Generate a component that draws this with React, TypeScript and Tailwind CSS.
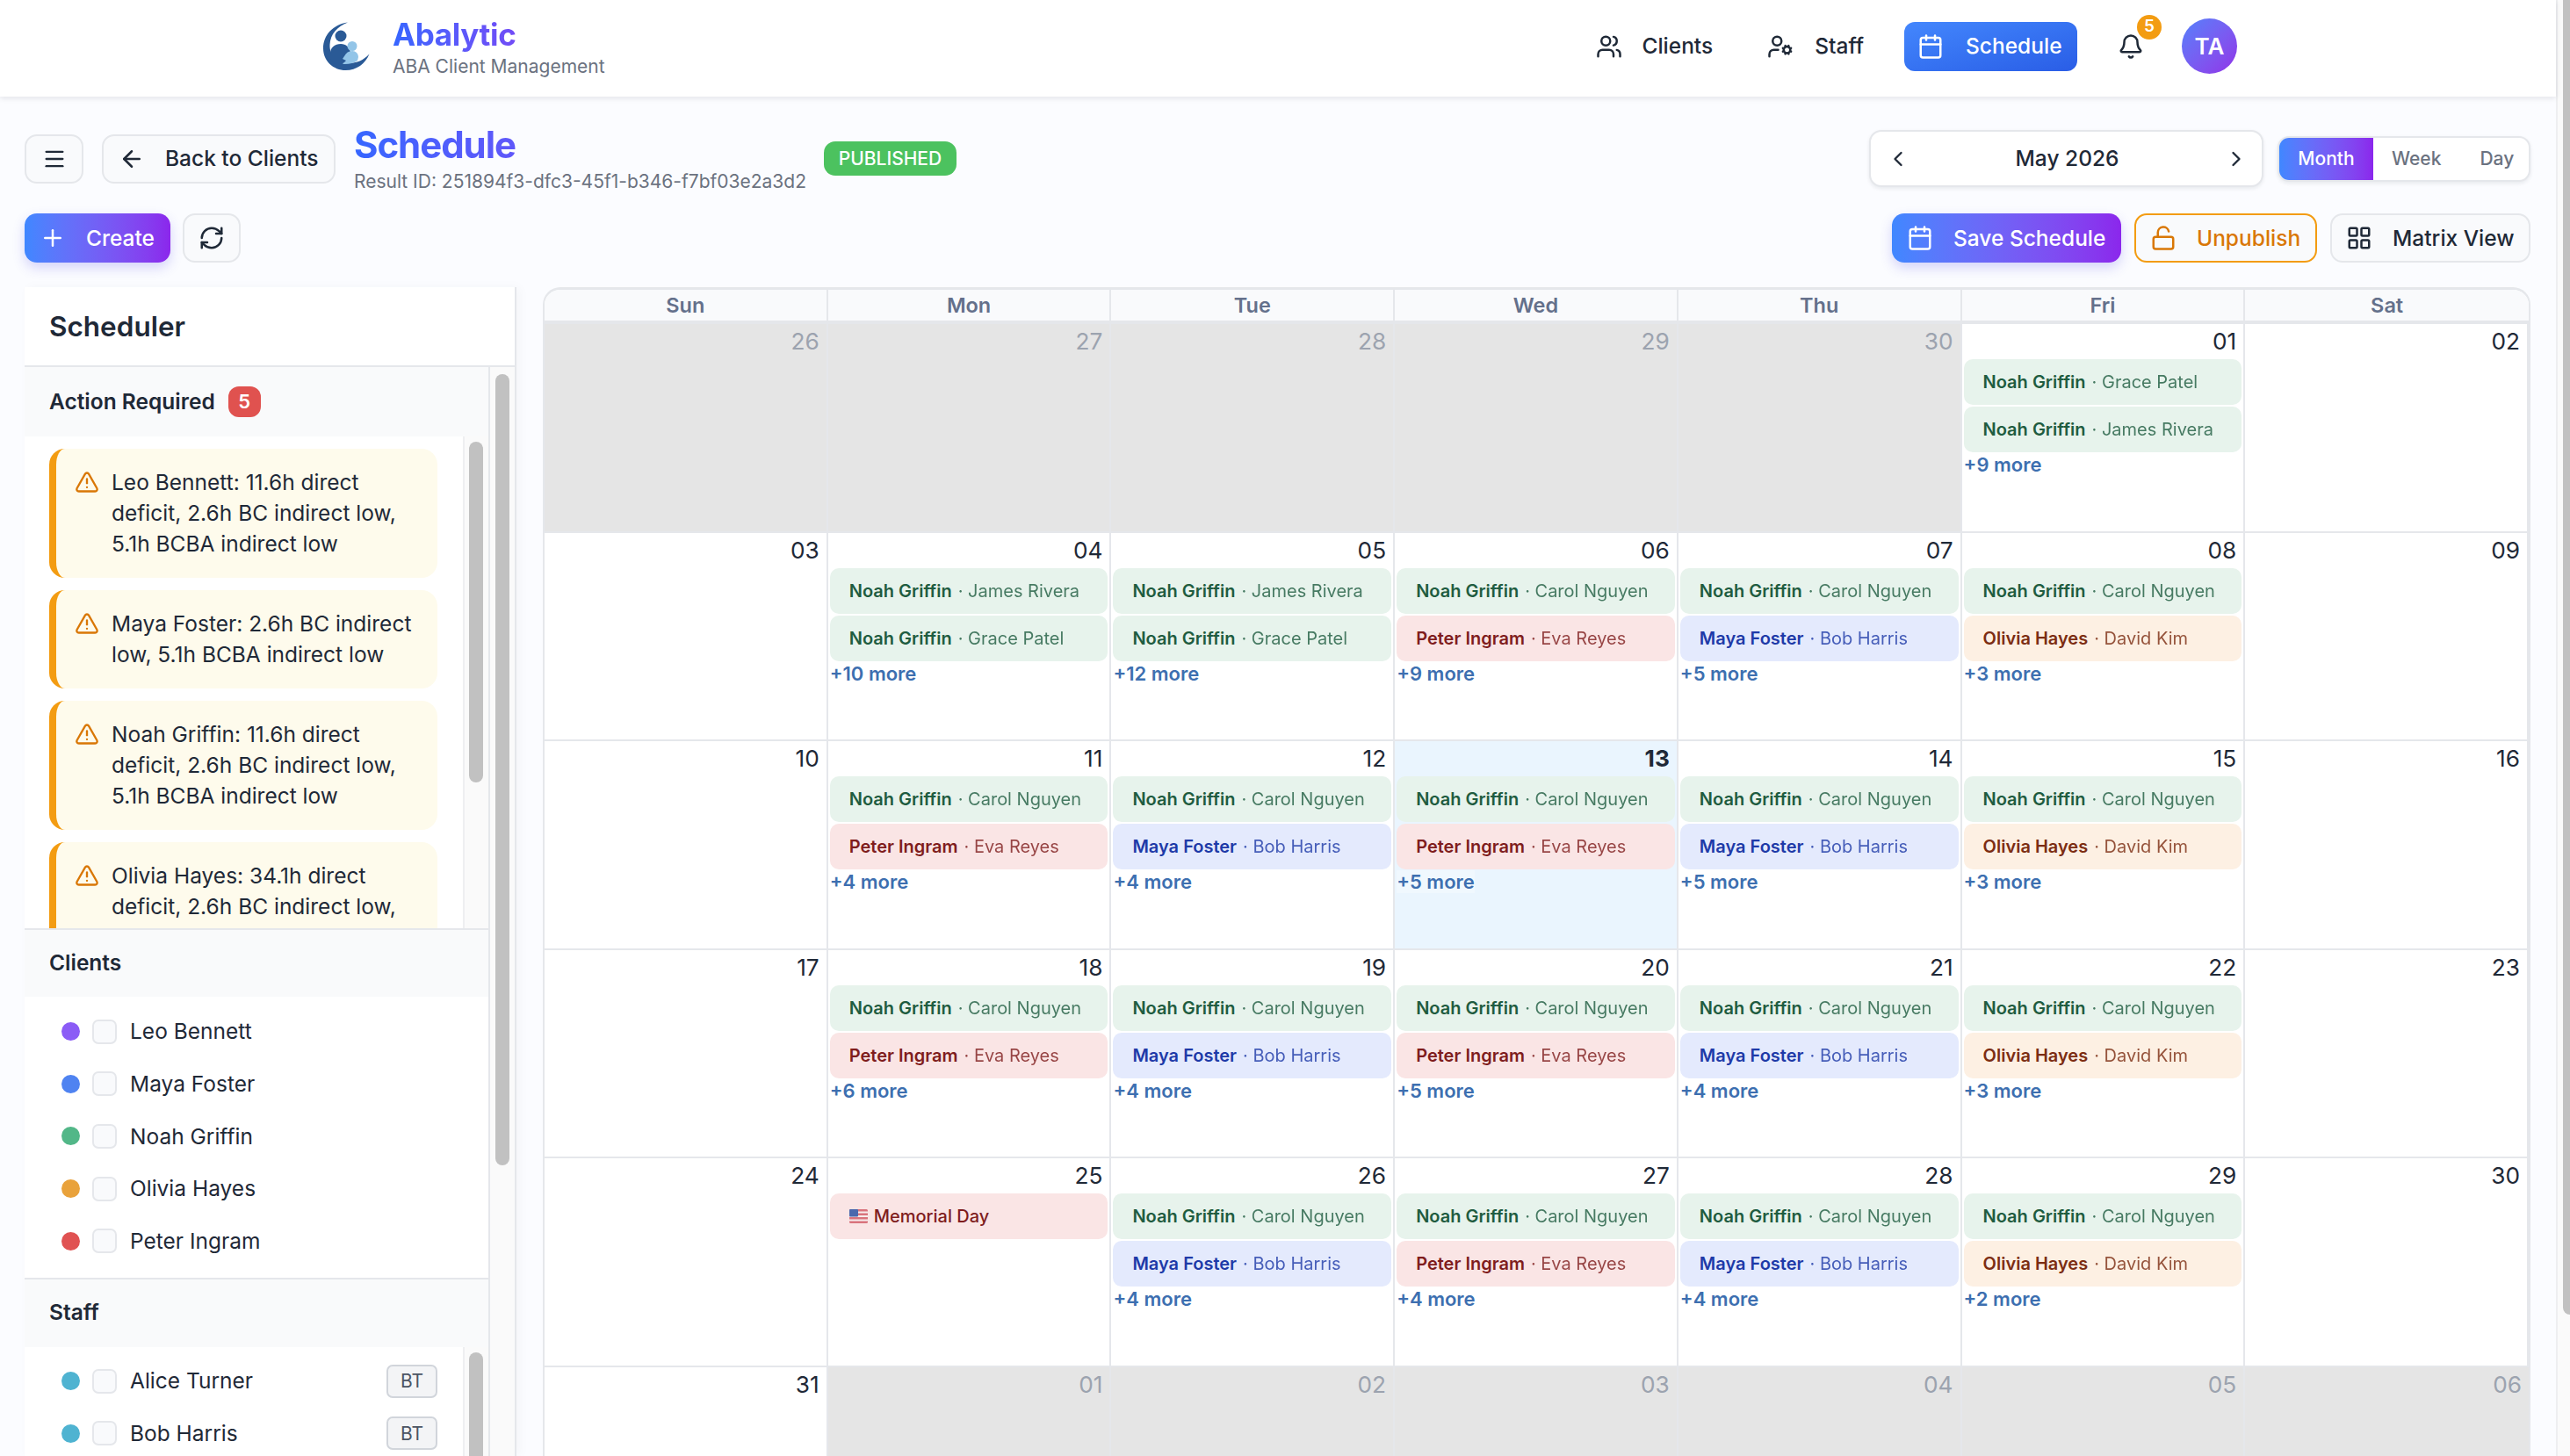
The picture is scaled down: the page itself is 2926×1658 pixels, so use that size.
/**
 * App.tsx
 * Month schedule page: top nav, toolbar, scheduler sidebar and calendar grid.
 */
import {
  ArrowLeft,
  Bell,
  Calendar,
  ChevronLeft,
  ChevronRight,
  LayoutGrid,
  LockOpen,
  Menu,
  Plus,
  RefreshCw,
  TriangleAlert,
  UserCog,
  Users,
} from "lucide-react";

type Tone = "green" | "red" | "blue" | "orange";

interface Booking {
  client: string;
  staff: string;
  tone: Tone;
}

interface Day {
  label: string;
  outside?: boolean;
  today?: boolean;
  bookings?: Booking[];
  holiday?: string;
  more?: number;
}

const toneClasses: Record<Tone, string> = {
  green: "bg-[#e7f3ec] text-[#1f5c40]",
  red: "bg-[#fae5e5] text-[#7f1d1d]",
  blue: "bg-[#e4eafd] text-[#1e3aa8]",
  orange: "bg-[#fdf0e3] text-[#7c2d12]",
};

const noah = (staff: string): Booking => ({ client: "Noah Griffin", staff, tone: "green" });
const carol = noah("Carol Nguyen");
const james = noah("James Rivera");
const grace = noah("Grace Patel");
const peter: Booking = { client: "Peter Ingram", staff: "Eva Reyes", tone: "red" };
const maya: Booking = { client: "Maya Foster", staff: "Bob Harris", tone: "blue" };
const olivia: Booking = { client: "Olivia Hayes", staff: "David Kim", tone: "orange" };

const weeks: Day[][] = [
  [
    { label: "26", outside: true },
    { label: "27", outside: true },
    { label: "28", outside: true },
    { label: "29", outside: true },
    { label: "30", outside: true },
    { label: "01", bookings: [grace, james], more: 9 },
    { label: "02" },
  ],
  [
    { label: "03" },
    { label: "04", bookings: [james, grace], more: 10 },
    { label: "05", bookings: [james, grace], more: 12 },
    { label: "06", bookings: [carol, peter], more: 9 },
    { label: "07", bookings: [carol, maya], more: 5 },
    { label: "08", bookings: [carol, olivia], more: 3 },
    { label: "09" },
  ],
  [
    { label: "10" },
    { label: "11", bookings: [carol, peter], more: 4 },
    { label: "12", bookings: [carol, maya], more: 4 },
    { label: "13", today: true, bookings: [carol, peter], more: 5 },
    { label: "14", bookings: [carol, maya], more: 5 },
    { label: "15", bookings: [carol, olivia], more: 3 },
    { label: "16" },
  ],
  [
    { label: "17" },
    { label: "18", bookings: [carol, peter], more: 6 },
    { label: "19", bookings: [carol, maya], more: 4 },
    { label: "20", bookings: [carol, peter], more: 5 },
    { label: "21", bookings: [carol, maya], more: 4 },
    { label: "22", bookings: [carol, olivia], more: 3 },
    { label: "23" },
  ],
  [
    { label: "24" },
    { label: "25", holiday: "Memorial Day" },
    { label: "26", bookings: [carol, maya], more: 4 },
    { label: "27", bookings: [carol, peter], more: 4 },
    { label: "28", bookings: [carol, maya], more: 4 },
    { label: "29", bookings: [carol, olivia], more: 2 },
    { label: "30" },
  ],
  [
    { label: "31" },
    { label: "01", outside: true },
    { label: "02", outside: true },
    { label: "03", outside: true },
    { label: "04", outside: true },
    { label: "05", outside: true },
    { label: "06", outside: true },
  ],
];

const alerts = [
  "Leo Bennett: 11.6h direct deficit, 2.6h BC indirect low, 5.1h BCBA indirect low",
  "Maya Foster: 2.6h BC indirect low, 5.1h BCBA indirect low",
  "Noah Griffin: 11.6h direct deficit, 2.6h BC indirect low, 5.1h BCBA indirect low",
  "Olivia Hayes: 34.1h direct deficit, 2.6h BC indirect low, 5.1h BCBA indirect low",
];

const clients = [
  { name: "Leo Bennett", dot: "bg-[#8b5cf6]" },
  { name: "Maya Foster", dot: "bg-[#4f83f1]" },
  { name: "Noah Griffin", dot: "bg-[#52b788]" },
  { name: "Olivia Hayes", dot: "bg-[#e9a23b]" },
  { name: "Peter Ingram", dot: "bg-[#e05252]" },
];

const brandGradient = "bg-gradient-to-r from-[#3f87ff] to-[#8b26ec]";
const outlineButton =
  "flex h-[56px] items-center rounded-[14px] border-2 border-[#e5e7eb] bg-[#f9fafc] text-[24.500px] font-medium text-[#1f2937]";

function Logo() {
  return (
    <svg viewBox="0 0 53 55" className="h-[55px] w-[53px] shrink-0">
      <path
        d="M28 .5C11 3 0 15 0 30c0 14.500 11.500 25 25.500 25C38 55 48 47.500 52.500 36.500 46 43.500 38 47 29 47 15 47 7 38 7.500 26 8 14 16 5 28 .5Z"
        fill="#2a5a96"
      />
      <circle cx="20" cy="16" r="6.500" fill="#2a5a96" />
      <path d="M8 36c0-7 5-11 12-11 6 0 10 4 11 9l-4 12-14 2-5-6Z" fill="#2a5a96" />
      <circle cx="33" cy="27.500" r="5.500" fill="#93c5e8" />
      <path d="M24 39c2-4 5-6 9-6s7 3 7 7l-1 4c-4 3-10 4.500-17 4l4-4-4-2Z" fill="#93c5e8" />
    </svg>
  );
}

function FlagIcon() {
  return (
    <svg viewBox="0 0 21 16" className="h-[16px] w-[21px] shrink-0">
      <rect width="21" height="16" rx="1.500" fill="#d9737c" />
      <rect y="2.500" width="21" height="2" fill="#f7ecec" />
      <rect y="7" width="21" height="2" fill="#f7ecec" />
      <rect y="11.500" width="21" height="2" fill="#f7ecec" />
      <rect width="10" height="8.500" rx="1" fill="#4a68ad" />
    </svg>
  );
}

function TopNav() {
  return (
    <header className="relative z-20 flex h-[110px] shrink-0 items-center justify-between bg-white pb-[5px] pl-[368px] pr-[363px] shadow-[0_2px_6px_rgba(15,23,42,0.1)]">
      <div className="flex items-center gap-[26px]">
        <Logo />
        <div className="mt-[3px]">
          <div className="bg-gradient-to-r from-[#3566ff] to-[#8b2ff0] bg-clip-text text-[35px] font-bold leading-[44px] tracking-[-0.01em] text-transparent">
            Abalytic
          </div>
          <div className="text-[21px] leading-[30px] text-[#6b7280]">ABA Client Management</div>
        </div>
      </div>
      <nav className="flex items-center text-[24.500px] font-medium text-[#1f2937]">
        <div className="flex items-center gap-[22px]">
          <Users className="h-[30px] w-[30px]" />
          <span>Clients</span>
        </div>
        <div className="ml-[62px] flex items-center gap-[24px]">
          <UserCog className="h-[30px] w-[30px]" />
          <span>Staff</span>
        </div>
        <div className="ml-[46px] flex h-[56px] w-[197px] items-center gap-[25px] rounded-[12px] bg-gradient-to-br from-[#4487fd] to-[#2a5de6] pl-[15px] text-white">
          <Calendar className="h-[30px] w-[30px]" />
          <span>Schedule</span>
        </div>
        <div className="relative ml-[46px]">
          <Bell className="h-[30px] w-[30px]" />
          <span className="absolute -top-[21px] left-[22px] flex h-[28px] w-[28px] items-center justify-center rounded-full bg-[#f39c12] text-[19px] font-semibold text-white">
            5
          </span>
        </div>
        <div className="ml-[43px] flex h-[63px] w-[63px] items-center justify-center rounded-full bg-gradient-to-br from-[#4f7ffb] to-[#8f2fe8] text-[26px] font-semibold text-white">
          TA
        </div>
      </nav>
    </header>
  );
}

function Toolbar() {
  return (
    <div className="shrink-0 pl-[28px] pr-[29px] pt-[38px]">
      <div className="flex h-[65px] items-center justify-between">
        <div className="flex items-center gap-[21px]">
          <button className={`${outlineButton} w-[67px] justify-center`}>
            <Menu className="h-[28px] w-[28px]" />
          </button>
          <button className={`${outlineButton} w-[266px] gap-[23px] pl-[17px]`}>
            <ArrowLeft className="h-[30px] w-[30px]" />
            <span>Back to Clients</span>
          </button>
          <div>
            <div className="bg-gradient-to-r from-[#3566ff] to-[#8b2ff0] bg-clip-text text-[42px] font-bold leading-[50px] tracking-tight text-transparent">
              Schedule
            </div>
            <div className="mt-[2px] text-[21px] leading-[30px] text-[#6b7280]">
              Result ID: 251894f3-dfc3-45f1-b346-f7bf03e2a3d2
            </div>
          </div>
          <span className="-ml-[1px] flex h-[39px] w-[151px] items-center justify-center rounded-[13px] bg-[#4cc25f] text-[21px] font-medium text-white">
            PUBLISHED
          </span>
        </div>
        <div className="flex items-center gap-[16px]">
          <div className="flex h-[65px] w-[449px] items-center justify-between rounded-[14px] border-2 border-[#e5e7eb] bg-white pl-[17px] pr-[15px] text-[#1f2937] shadow-[0_2px_4px_rgba(15,23,42,0.08)]">
            <ChevronLeft className="h-[28px] w-[28px]" />
            <span className="text-[24.500px] font-medium">May 2026</span>
            <ChevronRight className="h-[28px] w-[28px]" />
          </div>
          <div className="flex h-[52px] w-[288px] items-center overflow-hidden rounded-[13px] border-2 border-[#e5e7eb] bg-white text-[21px] font-medium text-[#6b7280] shadow-[0_2px_4px_rgba(15,23,42,0.08)]">
            <span className={`flex h-full w-[107px] items-center justify-center text-white ${brandGradient}`}>
              Month
            </span>
            <span className="ml-[21px]">Week</span>
            <span className="ml-[44px]">Day</span>
          </div>
        </div>
      </div>
      <div className="mt-[30px] flex items-center justify-between">
        <div className="flex items-center gap-[14px]">
          <button
            className={`flex h-[56px] w-[166px] items-center gap-[23px] rounded-[14px] pl-[17px] text-[24.500px] font-medium text-white shadow-[0_6px_14px_rgba(79,70,229,0.22)] ${brandGradient}`}
          >
            <Plus className="h-[30px] w-[30px]" />
            <span>Create</span>
          </button>
          <button className={`${outlineButton} w-[66px] justify-center`}>
            <RefreshCw className="h-[30px] w-[30px]" />
          </button>
        </div>
        <div className="flex items-center gap-[15px]">
          <button
            className={`flex h-[56px] w-[261px] items-center gap-[23px] rounded-[14px] pl-[17px] text-[24.500px] font-medium text-white shadow-[0_6px_14px_rgba(79,70,229,0.22)] ${brandGradient}`}
          >
            <Calendar className="h-[30px] w-[30px]" />
            <span>Save Schedule</span>
          </button>
          <button className="flex h-[56px] w-[208px] items-center gap-[23px] rounded-[14px] border-2 border-[#f39c12] bg-[#f9fafc] pl-[16px] text-[24.500px] font-medium text-[#d97706]">
            <LockOpen className="h-[30px] w-[30px]" />
            <span>Unpublish</span>
          </button>
          <button className={`${outlineButton} w-[228px] gap-[23px] pl-[16px]`}>
            <LayoutGrid className="h-[30px] w-[30px]" />
            <span>Matrix View</span>
          </button>
        </div>
      </div>
    </div>
  );
}

function PersonRow({ name, dot, badge }: { name: string; dot: string; badge?: string }) {
  return (
    <div className="flex h-[59.600px] items-center pl-[42px] pr-[29px]">
      <span className={`h-[21px] w-[21px] shrink-0 rounded-full ${dot}`} />
      <span className="ml-[14px] h-[28px] w-[28px] shrink-0 rounded-[7px] border-2 border-[#e5e7eb] bg-[#f9fafc]" />
      <span className="ml-[15px] flex-1 text-[24.500px] text-[#1f2937]">{name}</span>
      {badge && (
        <span className="flex h-[38px] w-[58px] items-center justify-center rounded-[7px] border-2 border-[#d1d5db] bg-[#f3f4f6] text-[21px] text-[#4b5563]">
          {badge}
        </span>
      )}
    </div>
  );
}

function Sidebar() {
  return (
    <aside className="flex h-full w-[560px] shrink-0 flex-col border-r-2 border-[#e5e7eb] bg-white shadow-[4px_0_12px_rgba(15,23,42,0.03)]">
      <div className="flex h-[91px] shrink-0 items-center border-b-2 border-[#e5e7eb] pl-[28px] text-[31.500px] font-semibold text-[#1f2937]">
        Scheduler
      </div>
      <div className="flex min-h-0 flex-1">
        <div className="flex w-[530px] shrink-0 flex-col border-r-2 border-[#e5e7eb]">
          <div className="flex h-[79px] shrink-0 items-center gap-[15px] bg-[#f9fafb] pl-[28px] text-[24.500px] font-semibold text-[#1f2937]">
            Action Required
            <span className="flex h-[35px] w-[37px] items-center justify-center rounded-[12px] bg-[#e0524f] text-[22px] text-white">
              5
            </span>
          </div>
          <div className="flex h-[560px] shrink-0 overflow-hidden">
            <div className="flex w-[499px] shrink-0 flex-col gap-[14px] pl-[28px] pr-[29px] pt-[14px]">
              {alerts.map((text) => (
                <div
                  key={text}
                  className="flex shrink-0 gap-[14px] rounded-[18px] border-l-[8px] border-[#f39c12] bg-[#fefbec] pb-[21px] pl-[21px] pr-[20px] pt-[21px]"
                >
                  <TriangleAlert className="mt-[3px] h-[28px] w-[28px] shrink-0 text-[#d97706]" />
                  <p className="text-[24.500px] leading-[35px] text-[#1f2937]">{text}</p>
                </div>
              ))}
            </div>
            <div className="flex-1 border-l-2 border-[#eeeff1] bg-[#fafafa] pl-[5px] pt-[6px]">
              <div className="h-[388px] w-[16px] rounded-[8px] bg-[#c1c1c1]" />
            </div>
          </div>
          <div className="flex h-[78px] shrink-0 items-center border-t-2 border-[#e5e7eb] bg-[#f9fafb] pb-[2px] pl-[28px] text-[24.500px] font-semibold text-[#1f2937]">
            Clients
          </div>
          <div className="shrink-0 pb-[12px] pt-[10px]">
            {clients.map((c) => (
              <PersonRow key={c.name} name={c.name} dot={c.dot} />
            ))}
          </div>
          <div className="flex h-[79px] shrink-0 items-center border-t-2 border-[#e5e7eb] bg-[#f9fafb] pb-[3px] pl-[28px] text-[24.500px] font-semibold text-[#1f2937]">
            Staff
          </div>
          <div className="flex min-h-0 flex-1 overflow-hidden">
            <div className="w-[499px] shrink-0 pt-[9px]">
              <PersonRow name="Alice Turner" dot="bg-[#4fb3d1]" badge="BT" />
              <PersonRow name="Bob Harris" dot="bg-[#4fb3d1]" badge="BT" />
            </div>
            <div className="flex-1 border-l-2 border-[#eeeff1] bg-[#fafafa] pl-[5px] pt-[6px]">
              <div className="h-[300px] w-[16px] rounded-[8px] bg-[#c1c1c1]" />
            </div>
          </div>
        </div>
        <div className="flex-1 bg-[#fafafa] pl-[6px] pt-[8px]">
          <div className="h-[901px] w-[16px] rounded-[8px] bg-[#c1c1c1]" />
        </div>
      </div>
    </aside>
  );
}

function DayCell({ day }: { day: Day }) {
  const cellBg = day.outside ? "bg-[#e5e5e5]" : day.today ? "bg-[#eaf5fe]" : "bg-white";
  return (
    <div className={`h-[237.500px] border-b-2 border-r-2 border-[#e5e7eb] px-[2px] last:border-r-0 ${cellBg}`}>
      <div
        className={`h-[40px] pr-[6px] pt-[3px] text-right text-[26.250px] leading-[34px] ${
          day.outside ? "text-[#9ca3af]" : "text-[#1f2937]"
        } ${day.today ? "font-bold" : ""}`}
      >
        {day.label}
      </div>
      <div className="flex flex-col gap-[2px]">
        {day.holiday && (
          <div className="flex h-[52px] items-center gap-[7px] rounded-[10px] bg-[#fae5e5] pl-[22px] text-[20px] font-medium text-[#7f1d1d]">
            <FlagIcon />
            {day.holiday}
          </div>
        )}
        {day.bookings?.map((b) => (
          <div
            key={b.client + b.staff}
            className={`flex h-[52px] items-center overflow-hidden whitespace-nowrap rounded-[10px] pl-[22px] text-[20px] ${
              toneClasses[b.tone]
            } ${day.today ? (b.tone === "green" ? "bg-[#d8ede9]" : "bg-[#ecdee3]") : ""}`}
          >
            <span className="font-semibold">{b.client}</span>
            <span className="ml-[7px] opacity-80">· {b.staff}</span>
          </div>
        ))}
      </div>
      {day.more && (
        <div className="mt-[1px] w-fit bg-white/30 text-[22px] font-semibold leading-[26px] text-[#3d6fb0]">
          +{day.more} more
        </div>
      )}
    </div>
  );
}

function MonthGrid() {
  return (
    <section className="h-[1340px] w-[2263px] shrink-0 overflow-hidden rounded-t-[20px] border-x-2 border-t-[3px] border-[#e5e7eb] bg-white">
      <div className="grid h-[39px] grid-cols-7 border-b-4 border-[#e5e7eb] bg-[#f9fafc] text-center text-[23.500px] font-semibold leading-[35px] text-[#64708b]">
        {["Sun", "Mon", "Tue", "Wed", "Thu", "Fri", "Sat"].map((d) => (
          <div key={d} className="border-r-2 border-[#e5e7eb] last:border-r-0">
            {d}
          </div>
        ))}
      </div>
      <div className="grid grid-cols-7">
        {weeks.flat().map((day, i) => (
          <DayCell key={i} day={day} />
        ))}
      </div>
    </section>
  );
}

export default function App() {
  return (
    <div className="flex h-[1658px] w-[2926px] overflow-hidden bg-[#fbfcff] font-['Inter',sans-serif]">
      <div className="flex w-[2910px] shrink-0 flex-col">
        <TopNav />
        <Toolbar />
        <div className="mt-[28px] flex min-h-0 flex-1 gap-[30px] pl-[28px]">
          <Sidebar />
          <MonthGrid />
        </div>
      </div>
      <div className="flex-1 border-l-2 border-[#eeeff1] bg-[#fafafa] pl-[6px]">
        <div className="h-[1497px] w-[10px] rounded-bl-[8px] bg-[#c1c1c1]" />
      </div>
    </div>
  );
}
